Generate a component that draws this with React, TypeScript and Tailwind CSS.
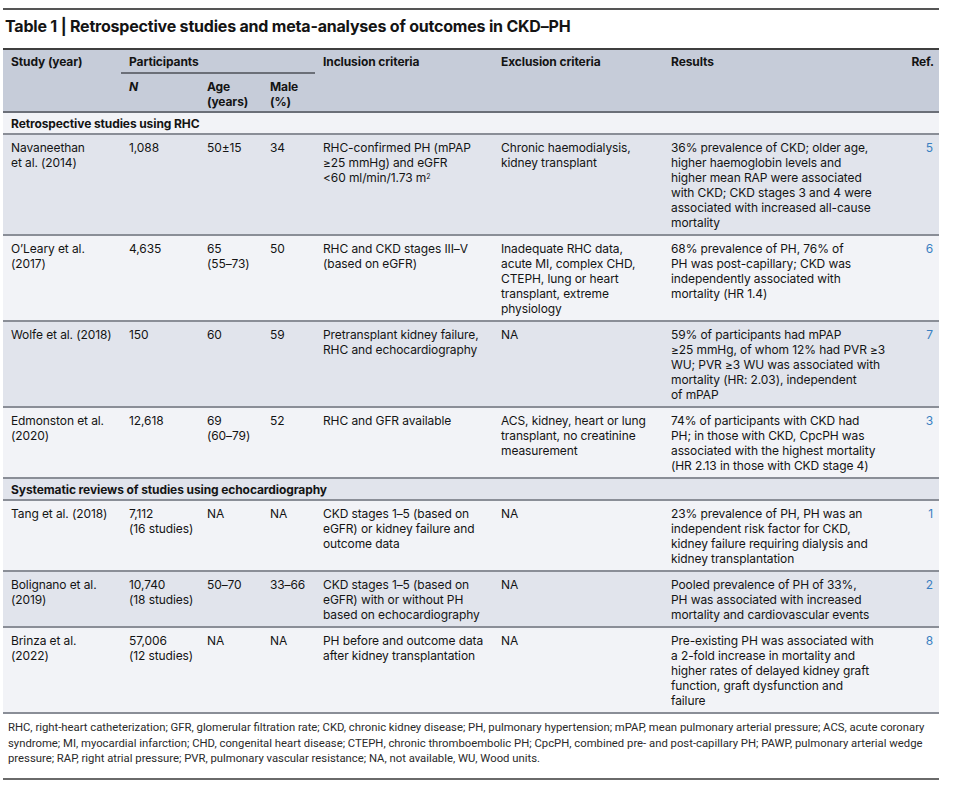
import { Fragment, ReactNode } from "react";

type Study = {
  study: string;
  n: string;
  age: string;
  male: string;
  inclusion: ReactNode;
  exclusion: string;
  results: string;
  ref: string;
};

type Section = { title: string; rows: Study[] };

// lines are broken by hand to follow the printed table
const sections: Section[] = [
  {
    title: "Retrospective studies using RHC",
    rows: [
      {
        study: "Navaneethan\net al. (2014)",
        n: "1,088",
        age: "50±15",
        male: "34",
        inclusion: (
          <>
            RHC-confirmed PH (mPAP
            <br />
            ≥25 mmHg) and eGFR
            <br />
            &lt;60 ml/min/1.73 m<sup className="text-[7px] leading-none">2</sup>
          </>
        ),
        exclusion: "Chronic haemodialysis,\nkidney transplant",
        results:
          "36% prevalence of CKD; older age,\nhigher haemoglobin levels and\nhigher mean RAP were associated\nwith CKD; CKD stages 3 and 4 were\nassociated with increased all-cause\nmortality",
        ref: "5",
      },
      {
        study: "O’Leary et al.\n(2017)",
        n: "4,635",
        age: "65\n(55–73)",
        male: "50",
        inclusion: "RHC and CKD stages III–V\n(based on eGFR)",
        exclusion:
          "Inadequate RHC data,\nacute MI, complex CHD,\nCTEPH, lung or heart\ntransplant, extreme\nphysiology",
        results:
          "68% prevalence of PH, 76% of\nPH was post-capillary; CKD was\nindependently associated with\nmortality (HR 1.4)",
        ref: "6",
      },
      {
        study: "Wolfe et al. (2018)",
        n: "150",
        age: "60",
        male: "59",
        inclusion: "Pretransplant kidney failure,\nRHC and echocardiography",
        exclusion: "NA",
        results:
          "59% of participants had mPAP\n≥25 mmHg, of whom 12% had PVR ≥3\nWU; PVR ≥3 WU was associated with\nmortality (HR: 2.03), independent\nof mPAP",
        ref: "7",
      },
      {
        study: "Edmonston et al.\n(2020)",
        n: "12,618",
        age: "69\n(60–79)",
        male: "52",
        inclusion: "RHC and GFR available",
        exclusion: "ACS, kidney, heart or lung\ntransplant, no creatinine\nmeasurement",
        results:
          "74% of participants with CKD had\nPH; in those with CKD, CpcPH was\nassociated with the highest mortality\n(HR 2.13 in those with CKD stage 4)",
        ref: "3",
      },
    ],
  },
  {
    title: "Systematic reviews of studies using echocardiography",
    rows: [
      {
        study: "Tang et al. (2018)",
        n: "7,112\n(16 studies)",
        age: "NA",
        male: "NA",
        inclusion: "CKD stages 1–5 (based on\neGFR) or kidney failure and\noutcome data",
        exclusion: "NA",
        results:
          "23% prevalence of PH, PH was an\nindependent risk factor for CKD,\nkidney failure requiring dialysis and\nkidney transplantation",
        ref: "1",
      },
      {
        study: "Bolignano et al.\n(2019)",
        n: "10,740\n(18 studies)",
        age: "50–70",
        male: "33–66",
        inclusion: "CKD stages 1–5 (based on\neGFR) with or without PH\nbased on echocardiography",
        exclusion: "NA",
        results:
          "Pooled prevalence of PH of 33%,\nPH was associated with increased\nmortality and cardiovascular events",
        ref: "2",
      },
      {
        study: "Brinza et al.\n(2022)",
        n: "57,006\n(12 studies)",
        age: "NA",
        male: "NA",
        inclusion: "PH before and outcome data\nafter kidney transplantation",
        exclusion: "NA",
        results:
          "Pre-existing PH was associated with\na 2-fold increase in mortality and\nhigher rates of delayed kidney graft\nfunction, graft dysfunction and\nfailure",
        ref: "8",
      },
    ],
  },
];

const footnote = [
  "RHC, right-heart catheterization; GFR, glomerular filtration rate; CKD, chronic kidney disease; PH, pulmonary hypertension; mPAP, mean pulmonary arterial pressure; ACS, acute coronary",
  "syndrome; MI, myocardial infarction; CHD, congenital heart disease; CTEPH, chronic thromboembolic PH; CpcPH, combined pre- and post-capillary PH; PAWP, pulmonary arterial wedge",
  "pressure; RAP, right atrial pressure; PVR, pulmonary vascular resistance; NA, not available, WU, Wood units.",
];

const Lines = ({ text }: { text: ReactNode }) => {
  if (typeof text !== "string") return <>{text}</>;
  return (
    <>
      {text.split("\n").map((line, i) => (
        <Fragment key={i}>
          {i > 0 && <br />}
          {line}
        </Fragment>
      ))}
    </>
  );
};

const cell = "align-top pl-[8px] pt-[5px] pb-[4px] whitespace-nowrap";
const head = "align-top pl-[8px] whitespace-nowrap font-bold";

const App = () => {
  let stripe = 0;
  const bg = () => (stripe++ % 2 === 0 ? "bg-[#f2f3f7]" : "bg-[#e1e4ec]");

  return (
    <div
      className="min-h-screen bg-white pt-[8px] pl-[3px] text-[#141414]"
      style={{ fontFamily: "Inter, 'Noto Sans', sans-serif" }}
    >
      <div className="w-[936px]">
        <div className="border-t-2 border-[#555] pt-[6px] pb-[12px] pl-[2px] text-[16px] leading-[20px] font-bold tracking-[-0.2px]">
          Table 1 | Retrospective studies and meta-analyses of outcomes in CKD–PH
        </div>

        <table className="w-full table-fixed border-collapse text-[12px] leading-[15px] tracking-[-0.1px]">
          <colgroup>
            <col className="w-[118px]" />
            <col className="w-[78px]" />
            <col className="w-[63px]" />
            <col className="w-[53px]" />
            <col className="w-[178px]" />
            <col className="w-[170px]" />
            <col className="w-[236px]" />
            <col className="w-[40px]" />
          </colgroup>
          <thead className="bg-[#c6ccd9] text-left">
            <tr className="border-t-2 border-[#3f3f3f]">
              <th rowSpan={2} className={`${head} pt-[4px]`}>
                Study (year)
              </th>
              <th colSpan={3} className={`${head} pt-[4px] pb-[3px] border-b-2 border-[#6b6f78]`}>
                Participants
              </th>
              <th rowSpan={2} className={`${head} pt-[4px]`}>
                Inclusion criteria
              </th>
              <th rowSpan={2} className={`${head} pt-[4px]`}>
                Exclusion criteria
              </th>
              <th rowSpan={2} className={`${head} pt-[4px]`}>
                Results
              </th>
              <th rowSpan={2} className={`${head} pt-[4px] text-right pr-[5px]`}>
                Ref.
              </th>
            </tr>
            <tr className="border-b-2 border-[#6b6f78]">
              <th className={`${head} italic pt-[5px] pb-[2px]`}>N</th>
              <th className={`${head} pt-[5px] pb-[2px]`}>
                Age
                <br />
                (years)
              </th>
              <th className={`${head} pt-[5px] pb-[2px]`}>
                Male
                <br />
                (%)
              </th>
            </tr>
          </thead>
          <tbody>
            {sections.map((section) => (
              <Fragment key={section.title}>
                <tr className={`${bg()} border-b-2 border-[#8a8e97]`}>
                  <td colSpan={8} className="align-top pl-[8px] pt-[3px] pb-[2px] whitespace-nowrap font-bold">
                    {section.title}
                  </td>
                </tr>
                {section.rows.map((r) => (
                  <tr key={r.study} className={`${bg()} border-b-2 border-[#8a8e97]`}>
                    <td className={cell}>
                      <Lines text={r.study} />
                    </td>
                    <td className={cell}>
                      <Lines text={r.n} />
                    </td>
                    <td className={cell}>
                      <Lines text={r.age} />
                    </td>
                    <td className={cell}>
                      <Lines text={r.male} />
                    </td>
                    <td className={cell}>
                      <Lines text={r.inclusion} />
                    </td>
                    <td className={cell}>
                      <Lines text={r.exclusion} />
                    </td>
                    <td className={cell}>
                      <Lines text={r.results} />
                    </td>
                    <td className={`${cell} text-right pr-[6px] text-[#3a80c2]`}>{r.ref}</td>
                  </tr>
                ))}
              </Fragment>
            ))}
          </tbody>
        </table>

        <div
          className="pt-[6px] pb-[11px] pl-[5px] text-[11.3px] leading-[15.5px] text-[#2a2a2a] whitespace-nowrap"
          style={{ fontFamily: "Roboto, 'Noto Sans', sans-serif" }}
        >
          {footnote.map((line) => (
            <div key={line}>{line}</div>
          ))}
        </div>
        <div className="border-t-2 border-[#6a6a6a]" />
      </div>
    </div>
  );
};

export default App;
